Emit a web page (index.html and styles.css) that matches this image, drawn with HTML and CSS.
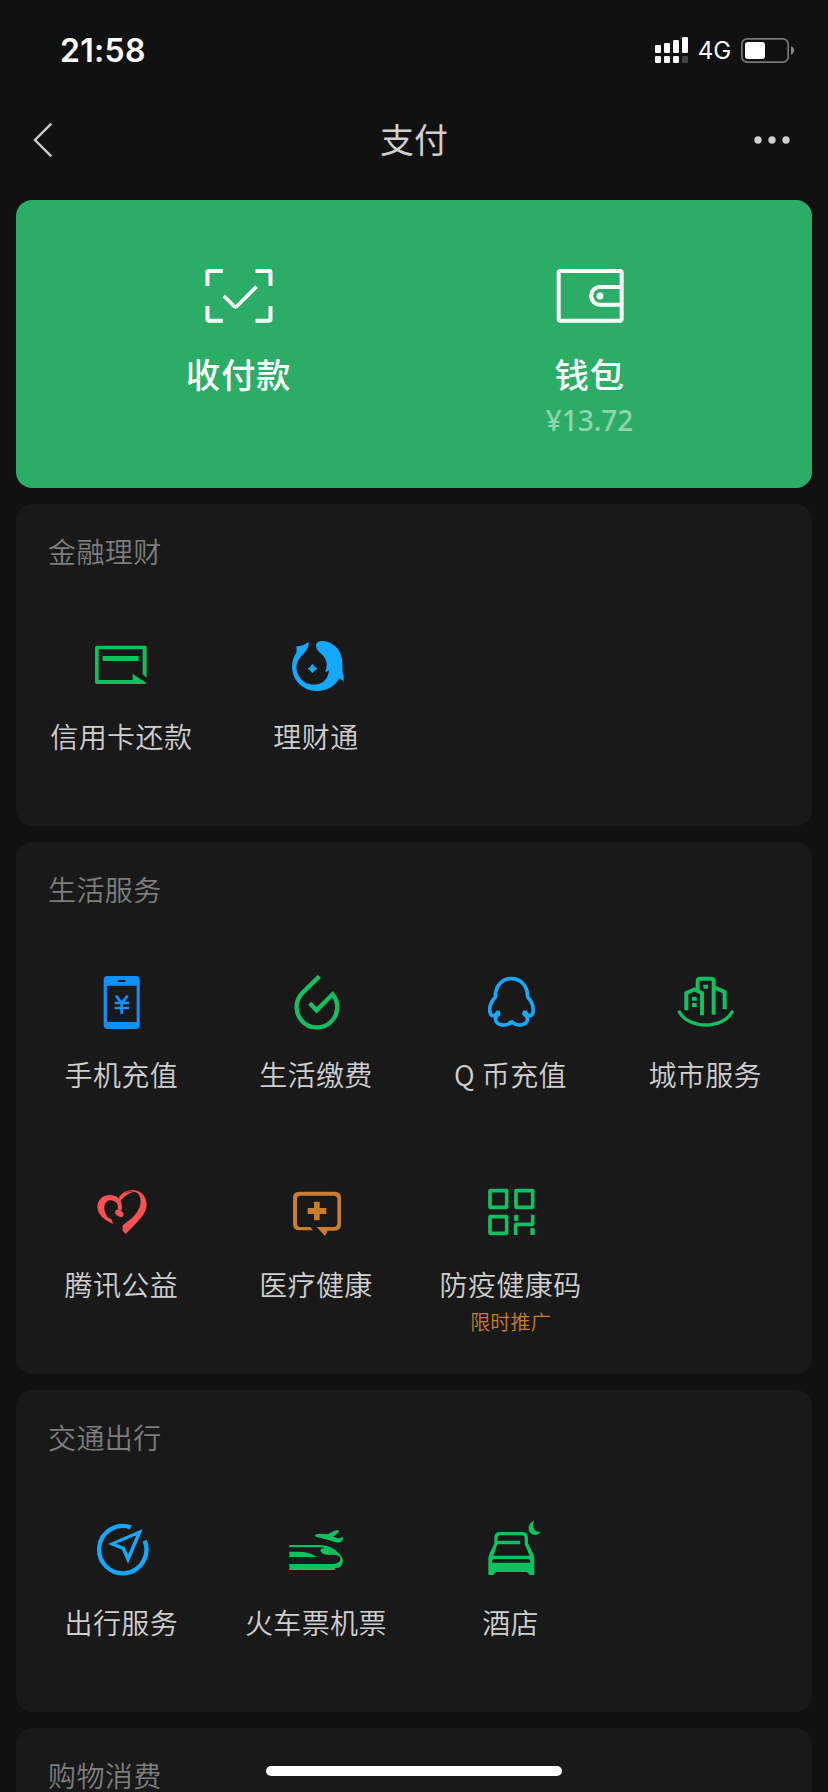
FILE: index.html
```html
<!DOCTYPE html>
<html lang="zh-CN">
<head>
<meta charset="utf-8">
<title>支付</title>
<link rel="stylesheet" href="styles.css">
</head>
<body>
<div class="screen">
  <div class="status-bar">
    <div class="time">21:58</div>
    <div class="status-right">
      <svg class="signal" viewBox="75 48 102 84" fill="#fff">
        <rect x="75" y="75" width="18" height="24" rx="4"/><rect x="102" y="69" width="18" height="30" rx="4"/><rect x="129" y="60" width="18" height="39" rx="4"/><rect x="156" y="51" width="18" height="48" rx="4"/>
        <rect x="75" y="108" width="18" height="21" rx="4"/><rect x="102" y="108" width="18" height="21" rx="4"/><rect x="129" y="108" width="18" height="21" rx="4"/><rect x="156" y="108" width="18" height="21" rx="4" fill="#444"/>
      </svg>
      <div class="network">4G</div>
      <svg class="battery" viewBox="330 48 165 81">
        <rect x="335.500" y="53.500" width="139" height="70" rx="16" fill="none" stroke="#777" stroke-width="5"/>
        <rect x="345" y="63" width="60" height="51" rx="9" fill="#fff"/>
        <path d="M483 75C495 80 495 96 483 101Z" fill="#888"/>
      </svg>
    </div>
  </div>
  <div class="nav-bar">
    <svg class="back" viewBox="36 303 66 114"><path d="M94 311L45 360L94 409" fill="none" stroke="#cfcfcf" stroke-width="7"/></svg>
    <div class="nav-title">支付</div>
    <svg class="more" viewBox="369 345 114 30" fill="#cfcfcf"><circle cx="384" cy="360" r="11"/><circle cx="426" cy="360" r="11"/><circle cx="468" cy="360" r="11"/></svg>
  </div>

  <div class="cards">
    <div class="pay-card">
      <div class="pay-item">
        <svg class="pay-icon" viewBox="127.500 72 216 192" fill="none" stroke="#fff" stroke-width="12">
          <path d="M141 138V97Q141 93 145 93H187M285 93H326Q330 93 330 97V138M330 198V238Q330 242 326 242H285M187 242H145Q141 242 141 238V198"/>
          <path d="M190 168L220 198Q225 203 230 198L288 140" stroke-width="11"/>
        </svg>
        <div class="pay-label">收付款</div>
      </div>
      <div class="pay-item">
        <svg class="pay-icon" viewBox="1180 72 216 192" fill="none" stroke="#fff" stroke-width="12">
          <rect x="1194" y="93" width="189" height="149" rx="5"/>
          <path d="M1383 141H1318A26.500 26.500 0 0 0 1318 194H1383"/>
          <circle cx="1318" cy="168" r="10.500" fill="#fff" stroke="none"/>
        </svg>
        <div class="pay-label">钱包</div>
        <div class="pay-amount">¥13.72</div>
      </div>
    </div>

    <div class="card">
      <div class="card-title">金融理财</div>
      <div class="grid">
        <div class="item">
          <svg class="icon green" viewBox="268 459 192 192">
            <path d="M292 497H436Q441 497 441 502V593L429 583V508H297V600H399V582L440 609Q439 612 435 612H292Q286 612 286 606V502Q286 497 292 497Z"/>
            <rect x="309" y="528" width="108" height="15"/>
          </svg>
          <div class="label">信用卡还款</div>
        </div>
        <div class="item">
          <svg class="icon blue" viewBox="852 459 192 192">
            <path d="M889 499C902 499 915 494 926 486C927 501 920 512 908 524C895 537 889 549 889 565C892 591 910 612 937 614C962 615 981 602 986 578L987 571L975 577C983 558 982 540 968 526C954 513 948 507 948 496C950 485 960 482 970 483C1004 487 1027 514 1027 550C1028 566 1026 576 1031 588V606C1027 600 1023 597 1018 595C1005 619 979 634 949 633C907 631 877 600 876 560C876 543 881 530 889 518Q891 509 889 499Z"/>
            <path d="M937 551Q943 560 952 566Q943 571 937 580Q932 571 923 566Q932 560 937 551Z"/>
          </svg>
          <div class="label">理财通</div>
        </div>
      </div>
    </div>

    <div class="card">
      <div class="card-title">生活服务</div>
      <div class="grid">
        <div class="item">
          <svg class="icon phone" viewBox="148 93 192 192">
            <path fill-rule="evenodd" d="M204 108H288Q300 108 300 120V255Q300 267 288 267H204Q192 267 192 255V120Q192 108 204 108ZM202 137V246H291V137ZM238 120Q234 120 234 123T238 126H254Q258 126 258 123T254 120Z"/>
            <path d="M229 167L246 190L264 167M225 189H268M225 204H268M246 190V222" fill="none" stroke="#1090ff" stroke-width="8"/>
          </svg>
          <div class="label">手机充值</div>
        </div>
        <div class="item">
          <svg class="icon line-green" viewBox="732 93 192 192">
            <path d="M838 109L789 157A61 61 0 1 0 878 163L830 211L809 190" stroke-width="13"/>
          </svg>
          <div class="label">生活缴费</div>
        </div>
        <div class="item">
          <svg class="icon line-blue" viewBox="146 93 192 192">
            <path d="M243 116C213 116 195 139 195 171C183 184 176 201 179 216C181 228 188 231 199 221L203 214L206 222C194 227 194 235 197 243C205 260 234 258 244 244C253 258 282 260 290 243C293 235 293 227 280 222L284 214L288 221C299 231 306 228 308 216C310 201 304 184 292 171C292 139 273 116 243 116Z" stroke-width="11" stroke-linejoin="bevel"/>
          </svg>
          <div class="label">Q 币充值</div>
        </div>
        <div class="item">
          <svg class="icon line-green" viewBox="730 93 192 192">
            <path d="M770 211V159L794 148L817 159V226M804 155V123Q804 116 811 116H845Q852 116 852 123V224M852 141L885 156V208" stroke-width="12"/>
            <path d="M749 216C777 268 880 268 907 216" stroke-width="10" stroke-linecap="round"/>
            <path d="M787 176H801M787 195H801M821 140H835" stroke-width="12"/>
          </svg>
          <div class="label">城市服务</div>
        </div>
        <div class="item">
          <svg class="icon red" viewBox="148 63 192 192">
            <path d="M220 191C195 181 173 163 173 140C174 119 189 105 211 105C233 106 246 120 247 139Q247 147 245 152L234 149C238 132 228 121 212 121C198 122 191 137 195 153C199 168 208 177 216 178Z"/>
            <path d="M228 150L240 150L251 158Q255 167 245 172C239 171 229 166 226 159Z"/>
            <path d="M236 116C244 99 260 90 280 90C304 91 321 109 321 134C320 162 298 181 258 222L249 212V197L254 192C285 171 303 149 303 123C303 107 294 97 285 96C267 98 251 110 242 124Z"/>
            <path d="M258 97Q270 92 282 97L295 103" fill="none" stroke="#191919" stroke-width="2"/>
          </svg>
          <div class="label">腾讯公益</div>
        </div>
        <div class="item">
          <svg class="icon orange" viewBox="732 63 192 192">
            <path fill-rule="evenodd" d="M778 95H884Q903 95 903 114V193Q903 212 884 212H863L855 228L830 201H881Q892 201 892 190V118Q892 107 881 107H782Q771 107 771 118V190Q771 201 782 201H811L819 211H778Q759 211 759 192V114Q759 95 778 95Z"/>
            <path d="M822 125H839V144H859V162H839V181H822V162H803V144H822Z"/>
          </svg>
          <div class="label">医疗健康</div>
        </div>
        <div class="item">
          <svg class="icon line-green" viewBox="146 63 192 192">
            <g stroke-width="11"><rect x="179" y="92" width="50" height="50" rx="1"/><rect x="257" y="92" width="50" height="50" rx="1"/><rect x="179" y="170" width="50" height="50" rx="1"/><path d="M256 225V196Q256 193 259 193H304Q307 193 307 190V164"/></g>
            <g fill="#13bf60" stroke="none"><rect x="251" y="164" width="13" height="19" rx="3"/><rect x="300" y="204" width="13" height="21" rx="3"/></g>
          </svg>
          <div class="label">防疫健康码</div>
          <div class="promo">限时推广</div>
        </div>
      </div>
    </div>

    <div class="card">
      <div class="card-title">交通出行</div>
      <div class="grid">
        <div class="item">
          <svg class="icon line-blue" viewBox="148 87 192 192">
            <path d="M273 112A71 71 0 1 0 315 152" stroke-width="13"/>
            <path fill="#14a8ff" stroke="none" fill-rule="evenodd" d="M309 117L265 221L247 179L205 162ZM290 136L229 161L255 171L265 194Z"/>
          </svg>
          <div class="label">出行服务</div>
        </div>
        <div class="item">
          <svg class="icon green" viewBox="42 87 192 192">
            <path d="M58 165H153C182 167 201 181 215 200C224 217 216 230 201 234H194V240H58V222H190C206 220 216 211 209 200C201 194 190 194 179 195C163 195 153 190 151 181C152 175 158 174 167 175Q158 172 150 172H58Z"/>
            <path d="M58 185H89C111 186 128 191 141 201H58Z"/>
            <path d="M134 135C145 130 158 131 174 133C184 127 194 121 204 120C207 122 207 125 204 128L190 140C199 144 205 147 211 143L219 141C222 145 218 151 213 156C205 160 195 156 183 152L138 140Q134 138 134 135Z"/>
          </svg>
          <div class="label">火车票机票</div>
        </div>
        <div class="item">
          <svg class="icon green" viewBox="626 87 192 192">
            <path fill-rule="evenodd" d="M688 126H756Q773 126 773 143V160L789 193L792 203V255H777Q774 246 766 246H681Q673 246 670 255H654V203L657 193L672 160V143Q672 126 688 126ZM690 136Q682 136 682 144V152H749V163H681L669 197H778L763 163V144Q763 136 755 136ZM673 207Q665 207 665 218H780Q780 207 772 207Z"/>
            <path d="M791 92C771 99 769 125 786 133C797 138 807 132 811 125C794 128 783 114 791 92Z"/>
          </svg>
          <div class="label">酒店</div>
        </div>
      </div>
    </div>

    <div class="card">
      <div class="card-title">购物消费</div>
    </div>
  </div>
  <div class="home-indicator"></div>
</div>
</body>
</html>
```
FILE: styles.css
```css
* { box-sizing: border-box; }

body {
  margin: 0;
  background: #111;
  font-family: "Noto Sans CJK SC", sans-serif;
}

.screen {
  position: relative;
  width: 828px;
  height: 1792px;
  overflow: hidden;
  background: #111;
}

.status-bar {
  display: flex;
  justify-content: space-between;
  align-items: center;
  height: 100px;
  padding: 0 33px 0 60px;
  color: #fff;
  font-family: Inter, "Liberation Sans", sans-serif;
}

.time { font-size: 32px; font-weight: 600; letter-spacing: 0.3px; }
.status-right { display: flex; align-items: center; }
.signal { width: 34px; height: 28px; }
.network { width: 51px; font-size: 24px; text-align: center; }
.battery { width: 55px; height: 27px; }

.nav-bar {
  display: grid;
  grid-template-columns: 1fr auto 1fr;
  align-items: center;
  height: 80px;
  padding: 0 37px 0 37px;
}

.back { width: 22px; height: 38px; margin-left: -5px; }
.more { width: 38px; height: 10px; justify-self: end; }

.nav-title {
  padding-bottom: 3px;
  color: #cfcfcf;
  font-size: 34px;
  font-weight: 400;
  line-height: 48px;
}

.cards {
  display: flex;
  flex-direction: column;
  gap: 16px;
  padding: 20px 16px 0;
}

.pay-card {
  display: flex;
  justify-content: center;
  height: 288px;
  padding-top: 64px;
  border-radius: 16px;
  background: #2bad67;
  color: #fff;
}

.pay-item {
  display: flex;
  flex-direction: column;
  align-items: center;
  width: 351px;
}

.pay-icon { width: 72px; height: 64px; }

.pay-label {
  margin-top: 21px;
  font-size: 34.5px;
  font-weight: 500;
  line-height: 48px;
  letter-spacing: 0.6px;
}

.pay-amount {
  margin-top: 5px;
  color: #91d4ae;
  font-family: "Noto Sans", sans-serif;
  font-size: 28px;
  font-weight: 500;
  line-height: 36px;
}

.card {
  flex: none;
  border-radius: 16px;
  background: #191919;
}

.card-title {
  height: 112px;
  padding: 27px 32px 0;
  color: #7e7e7e;
  font-size: 28px;
  font-weight: 350;
  line-height: 40px;
  letter-spacing: 0.4px;
}

.grid {
  display: grid;
  grid-template-columns: repeat(4, 1fr);
  padding: 0 9.5px 0 8px;
}

.item {
  display: flex;
  flex-direction: column;
  align-items: center;
  height: 210px;
  padding-top: 17px;
}

.icon { width: 64px; height: 64px; }
.green { fill: #0dc160; }
.blue { fill: #14a8ff; }
.phone { fill: #1090ff; }
.red { fill: #fa5151; }
.orange { fill: #c87d2f; }
.line-green { fill: none; stroke: #13bf60; }
.line-blue { fill: none; stroke: #14a8ff; }

.label {
  margin-top: 19px;
  color: #cfcfcf;
  font-size: 28px;
  font-weight: 350;
  line-height: 40px;
  letter-spacing: 0.4px;
  white-space: nowrap;
}

.promo {
  margin-top: 4px;
  color: #c87d2f;
  font-size: 20px;
  font-weight: 350;
  line-height: 28px;
  letter-spacing: 0.2px;
}

.home-indicator {
  position: absolute;
  left: 266px;
  top: 1766px;
  width: 296px;
  height: 10px;
  border-radius: 5px;
  background: #fff;
}
```
